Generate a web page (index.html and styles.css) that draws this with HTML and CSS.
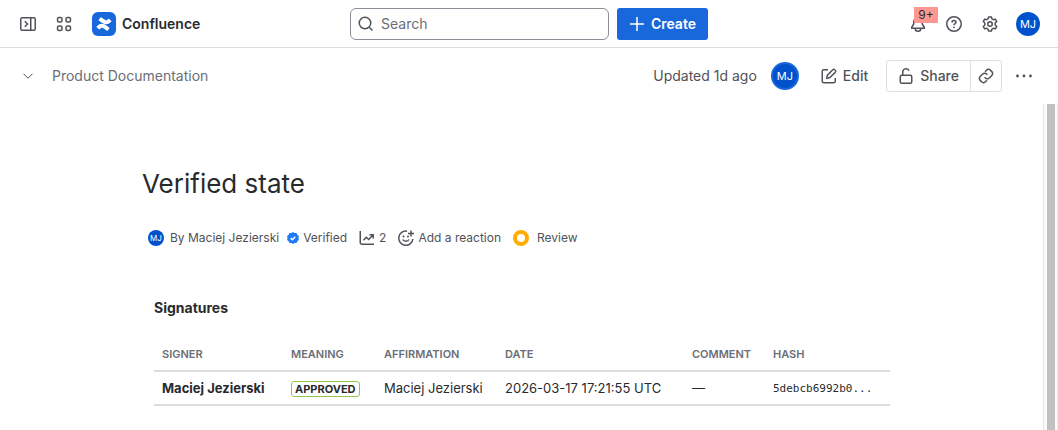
FILE: index.html
```html
<!DOCTYPE html>
<html lang="en">
<head>
  <meta charset="UTF-8">
  <meta name="viewport" content="width=device-width, initial-scale=1">
  <title>Verified state - Confluence</title>
  <link rel="stylesheet" href="styles.css">
</head>
<body>

<header class="topbar">
  <div class="topbar-left">
    <button class="icon-btn" aria-label="Expand sidebar">
      <svg width="16" height="16" viewBox="0 0 16 16"><rect x=".75" y="1.75" width="14.5" height="12.5" rx="1.5"/><path d="M10.75 2v12M4.75 5.25L7.5 8l-2.75 2.75"/></svg>
    </button>
    <button class="icon-btn" aria-label="Switch apps">
      <svg width="16" height="16" viewBox="0 0 16 16"><rect x="1.5" y="1.5" width="4.500" height="4.500" rx="1.5"/><rect x="10" y="1.5" width="4.500" height="4.500" rx="1.5"/><rect x="1.5" y="10" width="4.500" height="4.500" rx="1.5"/><rect x="10" y="10" width="4.500" height="4.500" rx="1.5"/></svg>
    </button>
    <a class="brand" href="#">
      <svg class="logo" width="24" height="24" viewBox="0 0 24 24">
        <rect width="24" height="24" rx="6" fill="#1868db"/>
        <g fill="#fff" transform="rotate(12 12 12) translate(5.300 5.700) scale(.56 .53)">
          <path d="M.87 18.257c-.248.382-.53.875-.763 1.245a.764.764 0 0 0 .255 1.04l4.965 3.054a.764.764 0 0 0 1.058-.26c.199-.332.454-.763.733-1.221 1.967-3.247 3.945-2.853 7.508-1.146l4.957 2.337a.764.764 0 0 0 1.028-.382l2.364-5.346a.764.764 0 0 0-.382-1 599.851 599.851 0 0 1-4.965-2.361C10.911 10.970 5.224 11.185.87 18.257z"/>
          <path d="M23.131 5.743c.249-.405.531-.875.764-1.250a.764.764 0 0 0-.256-1.034L18.675.404a.764.764 0 0 0-1.058.26c-.195.335-.451.763-.734 1.225-1.966 3.246-3.945 2.850-7.508 1.146L4.437.694a.764.764 0 0 0-1.027.382L1.046 6.422a.764.764 0 0 0 .382 1c1.039.49 3.105 1.467 4.965 2.361 6.698 3.246 12.392 3.029 16.738-4.040z"/>
        </g>
      </svg>
      Confluence
    </a>
  </div>

  <div class="topbar-center">
    <label class="search">
      <svg width="16" height="16" viewBox="0 0 16 16"><circle cx="7" cy="7" r="5.750"/><path d="M11.200 11.200L14.500 14.500"/></svg>
      <input type="text" placeholder="Search" aria-label="Search">
    </label>
    <button class="create">
      <svg width="16" height="16" viewBox="0 0 16 16"><path d="M8 1v14M1 8h14"/></svg>
      Create
    </button>
  </div>

  <div class="topbar-right">
    <button class="icon-btn bell" aria-label="Notifications">
      <svg width="16" height="16" viewBox="0 0 16 16"><path d="M8 1.500A4.250 4.250 0 0 0 3.750 5.750V8L1.750 11.250V12.250H14.250V11.250L12.250 8V5.750A4.250 4.250 0 0 0 8 1.500zM5.250 12.500a2.750 2.750 0 0 0 5.500 0"/></svg>
      <span class="badge">9+</span>
    </button>
    <button class="icon-btn" aria-label="Help">
      <svg width="16" height="16" viewBox="0 0 16 16"><circle cx="8" cy="8" r="7.250"/><path d="M6 6.400C6 5.200 6.900 4.500 8 4.500s2 .7 2 1.800C10 7.700 8 7.700 8 9.300"/><circle class="dot" cx="8" cy="11.300" r=".9"/></svg>
    </button>
    <button class="icon-btn" aria-label="Settings">
      <svg width="16" height="16" viewBox="0 0 16 16"><circle cx="8" cy="8" r="2.250"/><path stroke-linejoin="round" d="M6.600.9h2.800l.5 2 1.400.8 2-.6 1.400 2.400-1.500 1.500v2l1.500 1.500-1.400 2.400-2-.6-1.400.8-.5 2H6.600l-.5-2-1.400-.8-2 .6-1.400-2.400L2.800 9V7L1.300 5.500l1.400-2.400 2 .6 1.400-.8z"/></svg>
    </button>
    <button class="avatar avatar-nav" aria-label="Your profile">MJ</button>
  </div>
</header>

<div class="pagebar">
  <button class="icon-btn" aria-label="Show breadcrumbs">
    <svg width="12" height="12" viewBox="0 0 12 12"><path class="thin" d="M1.500 3.700L6 8.200l4.500-4.500"/></svg>
  </button>
  <a class="crumb" href="#">Product Documentation</a>

  <div class="page-actions">
    <a class="updated" href="#">Updated 1d ago</a>
    <button class="avatar avatar-page" aria-label="Maciej Jezierski">MJ</button>
    <button class="edit">
      <svg width="16" height="16" viewBox="0 0 16 16"><path d="M7 1.750H2.750a1.500 1.500 0 0 0-1.500 1.500v10a1.500 1.500 0 0 0 1.500 1.500h10a1.500 1.500 0 0 0 1.500-1.500V10M5.700 10.300l.7-3.200 5.400-5.400a1.300 1.300 0 0 1 1.900 0l.6.6a1.300 1.300 0 0 1 0 1.900L8.900 9.600z"/></svg>
      Edit
    </button>
    <div class="share-group">
      <button class="share">
        <svg width="16" height="16" viewBox="0 0 16 16"><rect x="2.250" y="7.250" width="11.500" height="8" rx="1.500"/><path d="M4.750 7V4a3.250 3.250 0 0 1 6.200-1.300"/></svg>
        Share
      </button>
      <button class="copy-link" aria-label="Copy link">
        <svg width="16" height="16" viewBox="0 0 16 16"><path d="M7 3.700l1.500-1.500a2.700 2.700 0 0 1 3.900 0l1.400 1.400a2.700 2.700 0 0 1 0 3.900l-2.500 2.500a2.700 2.700 0 0 1-3.900 0l-.8-.8M9 12.300l-1.500 1.500a2.700 2.700 0 0 1-3.900 0l-1.400-1.400a2.700 2.700 0 0 1 0-3.900L4.700 6a2.700 2.700 0 0 1 3.900 0l.8.8"/></svg>
      </button>
    </div>
    <button class="icon-btn more" aria-label="More actions">
      <svg width="18" height="16" viewBox="0 0 18 16"><circle class="dot" cx="2.500" cy="8" r="1.400"/><circle class="dot" cx="9" cy="8" r="1.400"/><circle class="dot" cx="15.500" cy="8" r="1.400"/></svg>
    </button>
  </div>
</div>

<div class="viewport">
  <main class="page">
    <h1>Verified state</h1>

    <div class="byline">
      <a class="by-item author" href="#"><span class="avatar avatar-small">MJ</span>By Maciej Jezierski</a>
      <button class="by-item verified">
        <svg width="12" height="12" viewBox="0 0 12 12"><path fill="#1d7afc" stroke="none" d="M6 0l1.600 1.100 2-.2.700 1.800 1.600 1.200L11.500 6l.4 2-1.600 1.300-.7 1.800-2-.2L6 12l-1.600-1.100-2 .2-.7-1.800L.1 8l.4-2L.1 3.900l1.600-1.200.7-1.800 2 .2z"/><path stroke="#fff" d="M3.700 6.100l1.600 1.600 3-3"/></svg>
        Verified
      </button>
      <button class="by-item views">
        <svg width="16" height="16" viewBox="0 0 16 16"><path d="M1.250 1v11.500a1.750 1.750 0 0 0 1.750 1.750H15M4.500 10.200l2.800-3 2.400 2.300L14 5M10.500 4.750h3.750V8.500"/></svg>
        2
      </button>
      <button class="by-item reaction">
        <svg width="16" height="16" viewBox="0 0 16 16"><path d="M9 1.200A7.100 7.100 0 1 0 14.900 9M4.700 9.500c1.300 2.300 5 2.300 6.300 0M13 .5v6M10 3.500h6"/><circle class="dot" cx="5.500" cy="6.400" r="1"/><circle class="dot" cx="10" cy="6.400" r="1"/></svg>
        Add a reaction
      </button>
      <button class="by-item review">
        <svg width="16" height="16" viewBox="0 0 16 16"><circle cx="8" cy="8" r="6" stroke="#ffab00" stroke-width="4"/></svg>
        Review
      </button>
    </div>

    <section class="signatures">
      <h2>Signatures</h2>
      <table>
        <colgroup>
          <col class="col-signer">
          <col class="col-meaning">
          <col class="col-affirmation">
          <col class="col-date">
          <col class="col-comment">
          <col>
        </colgroup>
        <thead>
          <tr>
            <th>SIGNER</th>
            <th>MEANING</th>
            <th>AFFIRMATION</th>
            <th>DATE</th>
            <th>COMMENT</th>
            <th>HASH</th>
          </tr>
        </thead>
        <tbody>
          <tr>
            <td><strong>Maciej Jezierski</strong></td>
            <td><span class="lozenge">APPROVED</span></td>
            <td>Maciej Jezierski</td>
            <td>2026-03-17 17:21:55 UTC</td>
            <td>—</td>
            <td><code>5debcb6992b0...</code></td>
          </tr>
        </tbody>
      </table>
    </section>
  </main>
  <div class="scroll-track"><div class="scroll-thumb"></div></div>
</div>

</body>
</html>
```

FILE: styles.css
```css
* {
    box-sizing: border-box;
    margin: 0;
    padding: 0;
}

body {
    display: flex;
    flex-direction: column;
    height: 100vh;
    overflow: hidden;
    background: #fff;
    color: #292a2e;
    font-family: Inter, "Liberation Sans", sans-serif;
    font-size: 14px;
    line-height: 20px;
}

a {
    color: inherit;
    text-decoration: none;
}

button {
    border: 0;
    background: none;
    color: inherit;
    font: inherit;
    cursor: pointer;
}

svg {
    display: block;
    flex: none;
    fill: none;
    stroke: #505258;
    stroke-width: 1.5;
    overflow: visible;
}

.logo {
    stroke: none;
}

.dot {
    fill: #505258;
    stroke: none;
}

.thin {
    stroke-width: 1;
}

.icon-btn {
    display: flex;
    align-items: center;
    justify-content: center;
    width: 32px;
    height: 32px;
}

/* top navigation */
.topbar {
    display: grid;
    grid-template-columns: 1fr minmax(0, 358px) 1fr;
    align-items: center;
    flex: none;
    height: 48px;
    padding: 0 12px;
    border-bottom: 1px solid #dddee1;
}

.topbar-left,
.topbar-center,
.topbar-right {
    display: flex;
    align-items: center;
}

.topbar-left {
    gap: 4px;
}

.topbar-center {
    gap: 8px;
}

.topbar-right {
    justify-content: flex-end;
    gap: 4px;
}

.brand {
    display: flex;
    align-items: center;
    gap: 6px;
    margin-left: 8px;
    font-weight: 600;
}

.search {
    display: flex;
    flex: 1;
    align-items: center;
    gap: 7px;
    height: 32px;
    padding: 0 7px;
    border: 1px solid #8c8f97;
    border-radius: 6px;
}

.search input {
    flex: 1;
    min-width: 0;
    border: 0;
    outline: 0;
    background: none;
    font: inherit;
}

.search input::placeholder {
    color: #6b6e76;
    opacity: 1;
}

.create {
    display: flex;
    align-items: center;
    gap: 6px;
    height: 32px;
    padding: 0 12px;
    border-radius: 3px;
    background: #1868db;
    color: #fff;
    font-weight: 600;
}

.create svg {
    stroke: #fff;
}

.bell {
    position: relative;
}

.badge {
    position: absolute;
    top: -1px;
    left: 12px;
    width: 24px;
    height: 16px;
    background: #fd9891;
    color: #292a2e;
    font-size: 12px;
    line-height: 16px;
    text-align: center;
}

.avatar {
    display: flex;
    align-items: center;
    justify-content: center;
    flex: none;
    border-radius: 50%;
    background: #0052cc;
    color: #fff;
    font-weight: 400;
}

.avatar-nav {
    width: 24px;
    height: 24px;
    margin: 0 6px;
    font-size: 11px;
}

.avatar-page {
    width: 28px;
    height: 28px;
    border: 2px solid #1868db;
    font-size: 11px;
}

.avatar-small {
    width: 16px;
    height: 16px;
    font-size: 8px;
}

/* page header */
.pagebar {
    display: flex;
    align-items: center;
    flex: none;
    height: 56px;
    padding: 0 18px 0 12px;
}

.crumb {
    margin-left: 8px;
    color: #6b6e76;
}

.page-actions {
    display: flex;
    align-items: center;
    margin-left: auto;
    color: #505258;
    font-weight: 500;
}

.updated {
    margin-right: 14px;
    font-weight: 400;
}

.edit {
    display: flex;
    align-items: center;
    gap: 6px;
    height: 32px;
    margin: 0 18px 0 22px;
}

.share-group {
    display: flex;
    height: 32px;
    border: 1px solid #dddee1;
    border-radius: 3px;
}

.share {
    display: flex;
    align-items: center;
    gap: 6px;
    padding: 0 11px;
}

.copy-link {
    display: flex;
    align-items: center;
    padding: 0 7px;
    border-left: 1px solid #dddee1;
}

.more {
    margin-left: 6px;
}

/* page content */
.viewport {
    display: flex;
    flex: 1;
    min-height: 0;
}

.page {
    flex: 1;
    max-width: 761px;
    margin: 0 auto;
    padding: 64px 0 0 1px;
}

h1 {
    font-size: 26px;
    font-weight: 400;
    line-height: 32px;
}

.byline {
    display: flex;
    align-items: center;
    margin-top: 28px;
    padding-left: 6px;
    color: #505258;
    font-size: 12px;
}

.by-item {
    display: flex;
    align-items: center;
    gap: 4px;
    height: 20px;
}

.author {
    gap: 6px;
}

.verified {
    margin-left: 8px;
}

.views,
.reaction,
.review {
    margin-left: 12px;
}

.review {
    gap: 8px;
}

.signatures {
    margin-top: 50px;
    padding: 0 12px;
}

h2 {
    font-size: 14px;
    font-weight: 700;
    line-height: 20px;
}

table {
    width: 100%;
    margin-top: 19px;
    border-collapse: collapse;
    table-layout: fixed;
    font-size: 13px;
}

.col-signer {
    width: 129px;
}

.col-meaning {
    width: 93px;
}

.col-affirmation {
    width: 121px;
}

.col-date {
    width: 187px;
}

.col-comment {
    width: 81px;
}

th,
td {
    height: 34px;
    padding: 0 8px;
    border-bottom: 2px solid #dddddd;
    text-align: left;
    white-space: nowrap;
}

th {
    color: #6b6e76;
    font-size: 11px;
    font-weight: 600;
}

strong {
    font-weight: 700;
}

.lozenge {
    display: inline-block;
    padding: 0 3px;
    border: 1px solid #94c748;
    border-radius: 3px;
    font-size: 11px;
    font-weight: 700;
    line-height: 14px;
    vertical-align: middle;
}

code {
    font-family: "DejaVu Sans Mono", "Liberation Mono", monospace;
    font-size: 11px;
}

/* scrollbar */
.scroll-track {
    flex: none;
    width: 15px;
    padding: 0 2px 0 3px;
    border-left: 1px solid #e8e8e8;
    border-right: 1px solid #ededed;
    background: #fafafa;
}

.scroll-thumb {
    height: 100%;
    background: #c1c1c1;
}
```
